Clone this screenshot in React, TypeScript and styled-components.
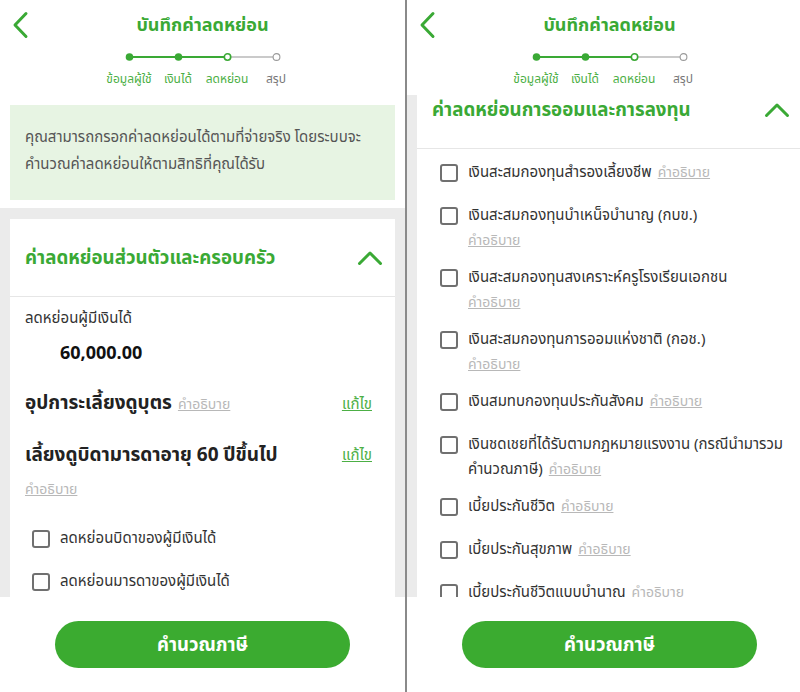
import React, { useLayoutEffect, useRef } from "react"
import styled, { createGlobalStyle } from "styled-components"

const GREEN = "#3aa935"

const GlobalStyle = createGlobalStyle`
    html, body {
        margin: 0;
        padding: 0;
        background: #fff;
        overflow: hidden;
    }
    body {
        font-family: "Noto Sans Thai", "Noto Sans", "Liberation Sans", sans-serif;
        color: #333;
    }
    * {
        box-sizing: border-box;
    }
`

type Saving = {
    label: string
    hintBelow?: boolean
}

const savings: Saving[] = [
    { label: "เงินสะสมกองทุนสำรองเลี้ยงชีพ" },
    { label: "เงินสะสมกองทุนบำเหน็จบำนาญ (กบข.)", hintBelow: true },
    { label: "เงินสะสมกองทุนสงเคราะห์ครูโรงเรียนเอกชน", hintBelow: true },
    { label: "เงินสะสมกองทุนการออมแห่งชาติ (กอช.)", hintBelow: true },
    { label: "เงินสมทบกองทุนประกันสังคม" },
    { label: "เงินชดเชยที่ได้รับตามกฎหมายแรงงาน (กรณีนำมารวมคำนวณภาษี)" },
    { label: "เบี้ยประกันชีวิต" },
    { label: "เบี้ยประกันสุขภาพ" },
    { label: "เบี้ยประกันชีวิตแบบบำนาญ" },
]

const steps = [
    { label: "ข้อมูลผู้ใช้", done: true },
    { label: "เงินได้", done: true },
    { label: "ลดหย่อน", done: true },
    { label: "สรุป", done: false },
]

const BackIcon = () => (
    <svg width="18" height="28" viewBox="0 0 18 28">
        <path
            d="M15 2.5 L4 14 L15 25.5"
            fill="none"
            stroke={GREEN}
            strokeWidth="3"
            strokeLinecap="round"
            strokeLinejoin="round"
        />
    </svg>
)

const ChevronUp = () => (
    <svg width="26" height="16" viewBox="0 0 26 16">
        <path
            d="M2.5 13.5 L13 3 L23.5 13.5"
            fill="none"
            stroke={GREEN}
            strokeWidth="3"
            strokeLinecap="round"
            strokeLinejoin="round"
        />
    </svg>
)

const StepTrack = () => (
    <svg width="196" height="10" viewBox="0 0 196 10">
        <line x1="24.5" y1="5" x2="122.5" y2="5" stroke={GREEN} strokeWidth="2" />
        <line x1="122.5" y1="5" x2="171.5" y2="5" stroke="#b8b8b8" strokeWidth="1.5" />
        <circle cx="24.5" cy="5" r="3.8" fill={GREEN} />
        <circle cx="73.5" cy="5" r="3.8" fill={GREEN} />
        <circle cx="122.5" cy="5" r="3.2" fill="#fff" stroke={GREEN} strokeWidth="1.6" />
        <circle cx="171.5" cy="5" r="3.4" fill="#fff" stroke="#9a9a9a" strokeWidth="1.1" />
    </svg>
)

const CheckItem: React.FC<{ label: string; hint?: boolean; hintBelow?: boolean }> = ({
    label,
    hint,
    hintBelow,
}) => (
    <ItemRow>
        <Box />
        <ItemText>
            {label}
            {hint && (hintBelow ? <HintBlock>คำอธิบาย</HintBlock> : <Hint>คำอธิบาย</Hint>)}
        </ItemText>
    </ItemRow>
)

const FamilyCard = () => (
    <Card>
        <CardHeader>
            <CardTitle>ค่าลดหย่อนส่วนตัวและครอบครัว</CardTitle>
            <ChevronUp />
        </CardHeader>
        <CardBody>
            <FieldLabel>ลดหย่อนผู้มีเงินได้</FieldLabel>
            <Amount>60,000.00</Amount>
            <EntryRow>
                <EntryTitle>
                    อุปการะเลี้ยงดูบุตร<Hint>คำอธิบาย</Hint>
                </EntryTitle>
                <EditLink>แก้ไข</EditLink>
            </EntryRow>
            <EntryRow $gap={21}>
                <EntryTitle>เลี้ยงดูบิดามารดาอายุ 60 ปีขึ้นไป</EntryTitle>
                <EditLink>แก้ไข</EditLink>
            </EntryRow>
            <HintLine>คำอธิบาย</HintLine>
            <CheckList $top={20}>
                <CheckItem label="ลดหย่อนบิดาของผู้มีเงินได้" />
                <CheckItem label="ลดหย่อนมารดาของผู้มีเงินได้" />
            </CheckList>
        </CardBody>
    </Card>
)

const SavingsCard = () => (
    <Card>
        <CardHeader>
            <CardTitle>ค่าลดหย่อนการออมและการลงทุน</CardTitle>
            <ChevronUp />
        </CardHeader>
        <CheckList $top={5} $pad>
            {savings.map((s) => (
                <CheckItem key={s.label} label={s.label} hint hintBelow={s.hintBelow} />
            ))}
        </CheckList>
    </Card>
)

const Phone: React.FC<{ scrollTop?: number; children: React.ReactNode }> = ({
    scrollTop = 0,
    children,
}) => {
    const ref = useRef<HTMLDivElement>(null)
    useLayoutEffect(() => {
        if (ref.current) ref.current.scrollTop = scrollTop
    }, [scrollTop])

    return (
        <PhoneWrap>
            <Header>
                <TopBar>
                    <BackButton>
                        <BackIcon />
                    </BackButton>
                    <Title>บันทึกค่าลดหย่อน</Title>
                    <span />
                </TopBar>
                <Stepper>
                    <StepTrack />
                    <StepLabels>
                        {steps.map((s) => (
                            <StepLabel key={s.label} $done={s.done}>
                                {s.label}
                            </StepLabel>
                        ))}
                    </StepLabels>
                </Stepper>
            </Header>
            <ScrollArea ref={ref}>{children}</ScrollArea>
            <Footer>
                <CalcButton>คำนวณภาษี</CalcButton>
            </Footer>
        </PhoneWrap>
    )
}

export default function App() {
    return (
        <>
            <GlobalStyle />
            <Screen>
                <Phone>
                    <Intro>
                        <InfoBox>
                            คุณสามารถกรอกค่าลดหย่อนได้ตามที่จ่ายจริง โดยระบบจะ
                            <br />
                            คำนวณค่าลดหย่อนให้ตามสิทธิที่คุณได้รับ
                        </InfoBox>
                    </Intro>
                    <Section>
                        <FamilyCard />
                    </Section>
                </Phone>
                <Divider />
                <Phone scrollTop={35}>
                    <Section>
                        <SavingsCard />
                    </Section>
                </Phone>
            </Screen>
        </>
    )
}

const Screen = styled.div`
    display: flex;
    width: 800px;
    height: 692px;
    overflow: hidden;
`

const PhoneWrap = styled.div`
    display: flex;
    flex-direction: column;
    flex-shrink: 0;
    width: 405px;
    height: 692px;
    background: #fff;
`

const Divider = styled.div`
    flex-shrink: 0;
    width: 2px;
    background: #8a8a8a;
`

const Header = styled.div`
    flex-shrink: 0;
    height: 95px;
`

const TopBar = styled.div`
    display: grid;
    grid-template-columns: 44px 1fr 44px;
    align-items: center;
    height: 48px;
`

const BackButton = styled.div`
    display: flex;
    align-items: center;
    padding-left: 11px;
    padding-top: 1px;
`

const Title = styled.h1`
    margin: 0;
    padding-top: 3px;
    text-align: center;
    font-size: 18px;
    font-weight: 700;
    color: ${GREEN};
`

const Stepper = styled.div`
    display: flex;
    flex-direction: column;
    align-items: center;
    width: 196px;
    margin: 4px auto 0;
`

const StepLabels = styled.div`
    display: grid;
    grid-template-columns: repeat(4, 49px);
    margin-top: 9px;
`

const StepLabel = styled.span<{ $done: boolean }>`
    text-align: center;
    white-space: nowrap;
    font-size: 12px;
    line-height: 16px;
    color: ${(p) => (p.$done ? "#4caf45" : "#777")};
`

const ScrollArea = styled.div`
    flex: 1;
    overflow: hidden;
    background: #ebebeb;
`

const Intro = styled.div`
    padding: 10px 10px 8px;
    background: #fff;
`

const InfoBox = styled.div`
    height: 95px;
    padding: 19px 15px 0;
    background: #e7f4e3;
    font-size: 15px;
    line-height: 27px;
    color: #555;
`

const Section = styled.div`
    padding: 11px 10px;
    background: #ebebeb;
`

const Card = styled.div`
    background: #fff;
`

const CardHeader = styled.div`
    display: flex;
    align-items: center;
    justify-content: space-between;
    height: 78px;
    padding: 0 12px 0 15px;
    border-bottom: 1px solid #e6e6e6;
`

const CardTitle = styled.h2`
    margin: 0;
    font-size: 18.7px;
    font-weight: 700;
    color: ${GREEN};
`

const CardBody = styled.div`
    padding: 10px 23px 0 15px;
`

const FieldLabel = styled.div`
    font-size: 15px;
    line-height: 24px;
    color: #333;
`

const Amount = styled.div`
    margin-top: 11px;
    padding-left: 35px;
    font-size: 18px;
    line-height: 24px;
    font-weight: 700;
    color: #111;
`

const EntryRow = styled.div<{ $gap?: number }>`
    display: flex;
    align-items: center;
    justify-content: space-between;
    margin-top: ${(p) => p.$gap ?? 23}px;
    line-height: 30px;
`

const EntryTitle = styled.div`
    font-size: 19px;
    font-weight: 700;
    color: #222;
`

const EditLink = styled.a`
    font-size: 15px;
    color: #4caf45;
    text-decoration: underline;
`

const Hint = styled.a`
    margin-left: 6px;
    font-size: 14px;
    font-weight: 400;
    color: #b8b8b8;
    text-decoration: underline;
`

const HintBlock = styled(Hint)`
    display: block;
    margin-left: 0;
    line-height: 25px;
`

const HintLine = styled(Hint)`
    display: block;
    margin: 9px 0 0;
    line-height: 20px;
`

const CheckList = styled.div<{ $top: number; $pad?: boolean }>`
    padding-top: ${(p) => p.$top}px;
    padding-left: ${(p) => (p.$pad ? "23px" : "7px")};
    padding-right: ${(p) => (p.$pad ? "14px" : "0")};
`

const ItemRow = styled.div`
    display: flex;
    align-items: flex-start;
    gap: 10px;
    padding: 6px 0;
`

const Box = styled.span`
    flex-shrink: 0;
    width: 18px;
    height: 18px;
    margin-top: 4px;
    border: 2px solid #707070;
    border-radius: 3px;
`

const ItemText = styled.div`
    min-height: 31px;
    font-size: 15px;
    line-height: 25px;
    color: #333;
`

const Footer = styled.div`
    flex-shrink: 0;
    display: flex;
    justify-content: center;
    height: 95px;
    padding-top: 24px;
    background: #fff;
`

const CalcButton = styled.button`
    width: 295px;
    height: 47px;
    border: none;
    border-radius: 24px;
    background: #3bab30;
    color: #fff;
    font-family: inherit;
    font-size: 18.5px;
    font-weight: 700;
`
